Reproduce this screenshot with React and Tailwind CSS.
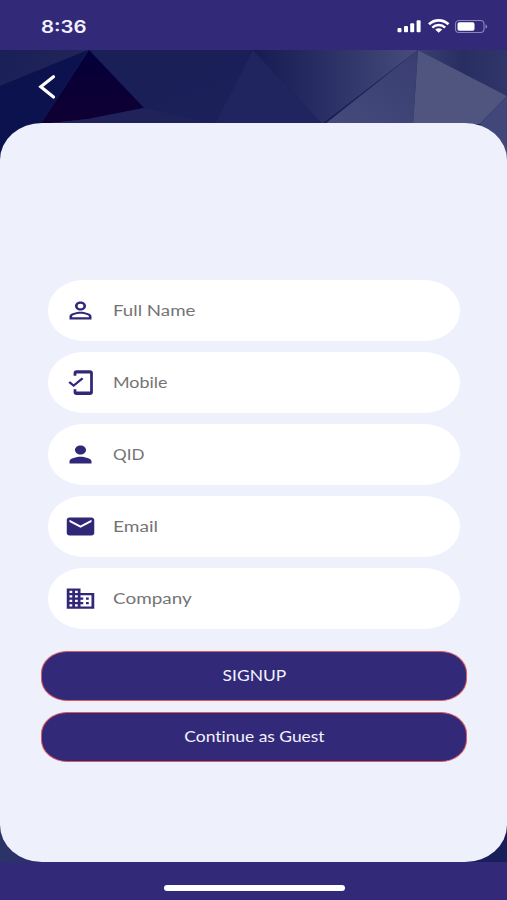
import React from "react";
import {
  MdPersonOutline,
  MdMobileFriendly,
  MdPerson,
  MdEmail,
  MdBusiness,
} from "react-icons/md";

const fields = [
  { label: "Full Name", Icon: MdPersonOutline, stretch: "scale-x-[1.205]" },
  { label: "Mobile", Icon: MdMobileFriendly, stretch: "scale-x-[1.155]" },
  { label: "QID", Icon: MdPerson, stretch: "scale-x-[1.1]" },
  { label: "Email", Icon: MdEmail, stretch: "scale-x-[1.23]" },
  { label: "Company", Icon: MdBusiness, stretch: "scale-x-[1.22]" },
];

function StatusBar() {
  return (
    <header className="flex h-[50px] shrink-0 items-start justify-between bg-[#322a78] pl-[41px] pr-[18px] text-white">
      <span className="mt-[15px] origin-left scale-x-[1.2] font-['Inter'] text-[17px] font-semibold leading-6 text-[#f3f0ff]">
        8:36
      </span>
      <svg className="mt-[18px] h-4 w-[92px]" viewBox="0 0 92 16" fill="white">
        <rect x="0.5" y="10" width="4" height="4.3" rx="1" />
        <rect x="7" y="8" width="4" height="6.3" rx="1" />
        <rect x="13.2" y="5.2" width="4" height="9.1" rx="1" />
        <rect x="19.6" y="2.2" width="4" height="12.1" rx="1" />
        <path d="M32 6.3C37.5 1 46 1 51.500 6.300" fill="none" stroke="white" strokeWidth="2.7" />
        <path d="M35.300 9.600C39 6.200 44.500 6.200 48.200 9.600" fill="none" stroke="white" strokeWidth="2.500" />
        <path d="M38.200 11.600Q41.700 9 45.300 11.600L41.700 14.700Z" />
        <rect x="58.500" y="2.500" width="28.500" height="12" rx="3.500" fill="none" stroke="#8c84bd" strokeWidth="1.100" />
        <rect x="60.500" y="4.300" width="17" height="8.400" rx="1.800" />
        <path d="M88.500 6.200Q92 8.500 88.500 10.800Z" fill="#8c84bd" />
      </svg>
    </header>
  );
}

function Backdrop() {
  return (
    <svg className="absolute inset-x-0 top-0 h-[115px] w-full" viewBox="0 50 507 115" preserveAspectRatio="none">
      <defs>
        <linearGradient id="slate" x1="0" x2="1">
          <stop offset="0" stopColor="#161b52" />
          <stop offset="0.45" stopColor="#2a3065" />
          <stop offset="1" stopColor="#474c7c" />
        </linearGradient>
        <linearGradient id="left" x1="0" x2="1" y2="0.3">
          <stop offset="0" stopColor="#191f58" />
          <stop offset="1" stopColor="#222557" />
        </linearGradient>
        <linearGradient id="dark" x1="0" y1="0" x2="0" y2="1">
          <stop offset="0" stopColor="#030039" />
          <stop offset="1" stopColor="#100032" />
        </linearGradient>
        <linearGradient id="blue" x1="0" y1="0" x2="1" y2="1">
          <stop offset="0" stopColor="#181d59" />
          <stop offset="1" stopColor="#1c2159" />
        </linearGradient>
        <linearGradient id="violet" x1="0" y1="1" x2="1" y2="0">
          <stop offset="0" stopColor="#454b7b" />
          <stop offset="1" stopColor="#393d72" />
        </linearGradient>
        <linearGradient id="navy" x1="0" x2="1">
          <stop offset="0" stopColor="#3a4070" />
          <stop offset="0.5" stopColor="#282e62" />
          <stop offset="1" stopColor="#30366a" />
        </linearGradient>
      </defs>
      <rect y="50" width="507" height="115" fill="#171c55" />
      <path d="M0 50H89L0 86Z" fill="url(#left)" />
      <path d="M0 86L88 50L41 124V165H0Z" fill="#0b124d" />
      <path d="M89 50H253L144 108Z" fill="#1b1f58" />
      <path d="M89 50L144 108L88 121L41 124Z" fill="url(#dark)" />
      <path d="M144 108L253 50L215 124H41L88 119Z" fill="url(#blue)" />
      <path d="M144 108L88 119L41 124H215Z" fill="#20235a" />
      <path d="M253 50L215 124H322Z" fill="#20255f" />
      <path d="M253 50H418L322 124Z" fill="url(#slate)" />
      <path d="M418 50L325 124H413Z" fill="url(#violet)" />
      <path d="M418 50L507 96V50Z" fill="url(#navy)" />
      <path d="M418 50L507 96L480 124H413Z" fill="#50557f" />
      <path d="M507 96V165L480 124Z" fill="#42477a" />
    </svg>
  );
}

function Field({ label, Icon, stretch }) {
  return (
    <label className="flex h-[60.5px] items-center bg-white pl-[16px] [border-radius:36px/30px]">
      <Icon className="h-[27px] w-[33px] text-[#302777]" preserveAspectRatio="none" />
      <span className={`ml-[16px] origin-left text-[15.5px] leading-5 text-[#747474] ${stretch}`}>
        {label}
      </span>
    </label>
  );
}

function ActionButton({ children }) {
  return (
    <button className="flex h-[50px] w-full items-center justify-center border border-[#dc5a5e] bg-[#322a78] pb-[2px] text-[15px] text-[#f4f2ff] [border-radius:26px/22px]">
      <span className="inline-block scale-x-[1.16] [font-variant-ligatures:none]">{children}</span>
    </button>
  );
}

export default function App() {
  return (
    <div className="flex h-[900px] w-[507px] flex-col overflow-hidden bg-[#322a78] font-['Lato',sans-serif]">
      <StatusBar />
      <main className="relative flex h-[812px] flex-col bg-linear-to-r from-[#2c3368] to-[#181e59]">
        <Backdrop />
        <div className="relative flex h-[73px] shrink-0 items-start pl-[38px] pt-[24px]">
          <svg className="h-[26px] w-[18px]" viewBox="0 0 18 26" fill="none" stroke="white" strokeWidth="3.2" strokeLinecap="round">
            <path d="M15.500 2.800L2.800 12.800L15.500 23" />
          </svg>
        </div>
        <section className="relative flex h-[739px] flex-col bg-[#eef0fc] pl-[41px] pr-[40px] pt-[157px] [border-radius:42px/37px]">
          <div className="flex flex-col gap-[11.5px] px-[7px]">
            {fields.map((field) => (
              <Field key={field.label} {...field} />
            ))}
          </div>
          <div className="mt-[22.5px] flex flex-col gap-[11px]">
            <ActionButton>SIGNUP</ActionButton>
            <ActionButton>Continue as Guest</ActionButton>
          </div>
        </section>
      </main>
      <footer className="flex h-[38px] justify-center pt-[23px]">
        <div className="ml-px h-[6px] w-[181px] rounded-full bg-white" />
      </footer>
    </div>
  );
}
